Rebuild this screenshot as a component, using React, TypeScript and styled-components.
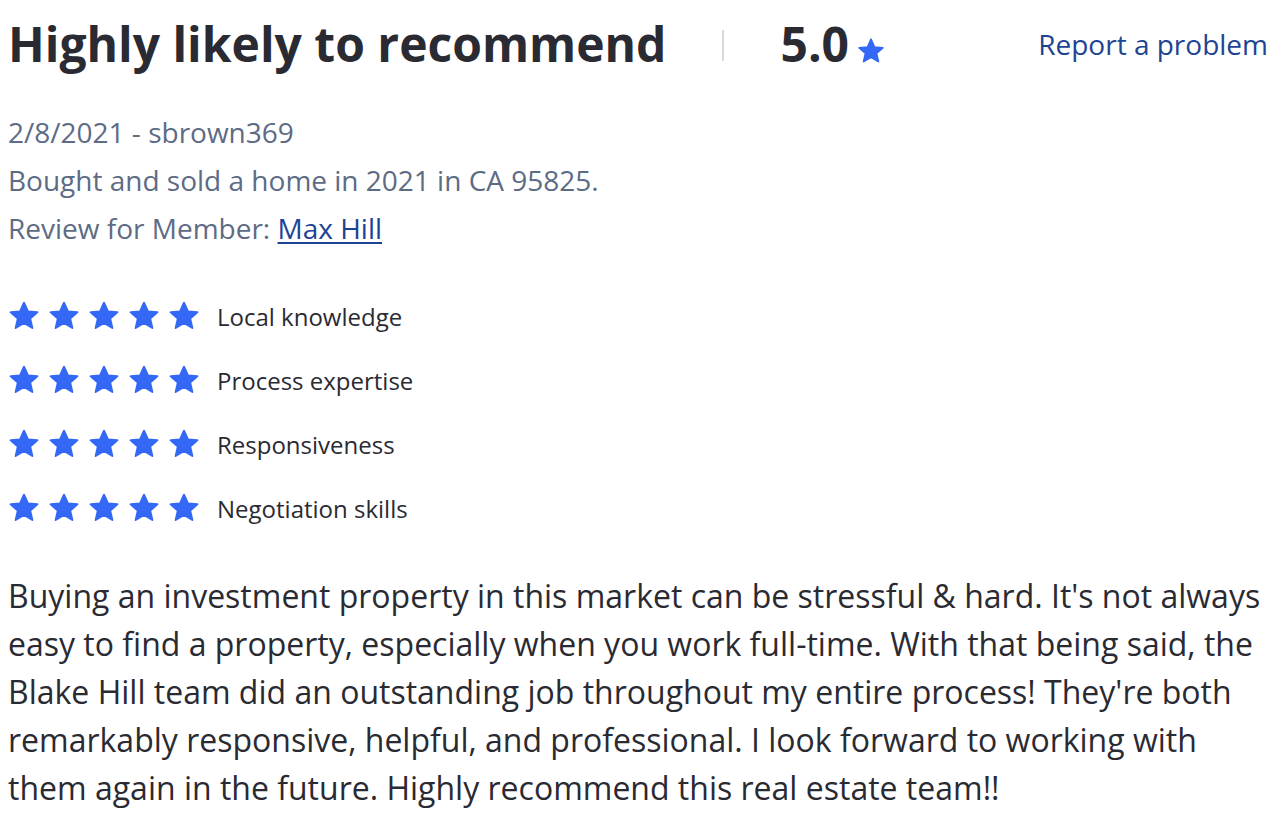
import styled, { createGlobalStyle } from 'styled-components';

const GlobalStyle = createGlobalStyle`
  body {
    margin: 0;
    background: #ffffff;
    font-family: 'Open Sans', 'Noto Sans', sans-serif;
    color: #2a2a33;
  }
`;

const Page = styled.div`
  padding: 12px 20px 0 8px;
`;

const Header = styled.div`
  display: flex;
  align-items: center;
  height: 64px;
`;

const Title = styled.h1`
  margin: 0;
  font-size: 48px;
  font-weight: 700;
  line-height: 64px;
  color: #2a2a33;
`;

const Divider = styled.div`
  width: 2px;
  height: 31px;
  background: #d9d9dc;
  margin: 2px 56px 0 56px;
`;

const Score = styled.div`
  display: flex;
  align-items: flex-end;
  gap: 7px;
  font-size: 48px;
  font-weight: 700;
  line-height: 64px;

  svg {
    margin-bottom: 10px;
  }
`;

const ReportLink = styled.a`
  margin-left: auto;
  font-size: 28px;
  color: #1d4494;
  text-decoration: none;
  line-height: 40px;
  cursor: pointer;
`;

const Meta = styled.div`
  margin-top: 32px;
  font-size: 28px;
  line-height: 48px;
  color: #5d6b85;
`;

const MemberLink = styled.a`
  color: #1d4494;
  text-decoration: underline;
  text-underline-offset: 3px;
`;

const Ratings = styled.div`
  display: flex;
  flex-direction: column;
  gap: 24px;
  margin-top: 44px;
`;

const RatingRow = styled.div`
  display: flex;
  align-items: center;
  height: 40px;
`;

const Stars = styled.div`
  display: flex;
  gap: 6px;
  margin: 0 16px 0 -1px;
`;

const Label = styled.span`
  font-size: 24px;
  color: #2a2a33;
`;

const Body = styled.p`
  margin: 44px 0 0 0;
  font-size: 32px;
  line-height: 48px;
  color: #2a2a33;
`;

const Star = ({ size }: { size: number }) => (
  <svg width={size} height={size} viewBox='0 0 24 24'>
    <path
      d='M12 2.6l2.75 6.2 6.7.6-5.1 4.45 1.55 6.6L12 16.95 6.1 20.45l1.55-6.6L2.55 9.4l6.7-.6z'
      fill='#3468f5'
      stroke='#3468f5'
      strokeWidth='1.4'
      strokeLinejoin='round'
    />
  </svg>
);

const categories = [
  'Local knowledge',
  'Process expertise',
  'Responsiveness',
  'Negotiation skills',
];

export default function App() {
  return (
    <>
      <GlobalStyle />
      <Page>
        <Header>
          <Title>Highly likely to recommend</Title>
          <Divider />
          <Score>
            5.0
            <Star size={30} />
          </Score>
          <ReportLink>Report a problem</ReportLink>
        </Header>
        <Meta>
          <div>2/8/2021 - sbrown369</div>
          <div>Bought and sold a home in 2021 in CA 95825.</div>
          <div>
            Review for Member: <MemberLink>Max Hill</MemberLink>
          </div>
        </Meta>
        <Ratings>
          {categories.map((c) => (
            <RatingRow key={c}>
              <Stars>
                {[0, 1, 2, 3, 4].map((i) => (
                  <Star key={i} size={34} />
                ))}
              </Stars>
              <Label>{c}</Label>
            </RatingRow>
          ))}
        </Ratings>
        <Body>
          Buying an investment property in this market can be stressful &amp;
          hard. It's not always easy to find a property, especially when you
          work full-time. With that being said, the Blake Hill team did an
          outstanding job throughout my entire process! They're both remarkably
          responsive, helpful, and professional. I look forward to working with
          them again in the future. Highly recommend this real estate team!!
        </Body>
      </Page>
    </>
  );
}
